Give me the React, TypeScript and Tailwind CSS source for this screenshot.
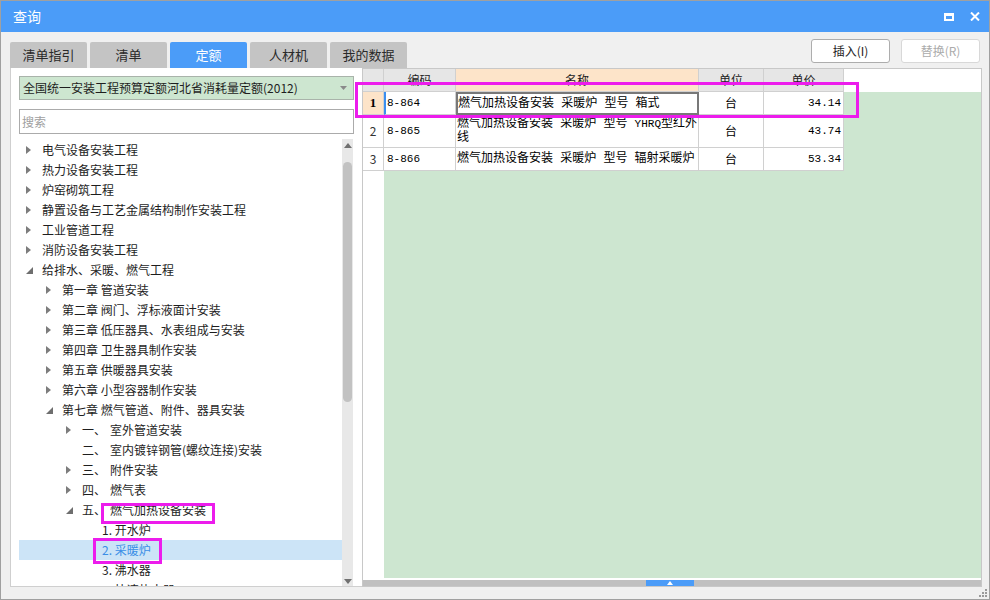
import React from "react";

type Node = {
  level: number;
  label: string;
  prefix?: string;
  state?: "open" | "closed";
  selected?: boolean;
};

const tree: Node[] = [
  { level: 0, label: "电气设备安装工程", state: "closed" },
  { level: 0, label: "热力设备安装工程", state: "closed" },
  { level: 0, label: "炉窑砌筑工程", state: "closed" },
  { level: 0, label: "静置设备与工艺金属结构制作安装工程", state: "closed" },
  { level: 0, label: "工业管道工程", state: "closed" },
  { level: 0, label: "消防设备安装工程", state: "closed" },
  { level: 0, label: "给排水、采暖、燃气工程", state: "open" },
  { level: 1, label: "第一章 管道安装", state: "closed" },
  { level: 1, label: "第二章 阀门、浮标液面计安装", state: "closed" },
  { level: 1, label: "第三章 低压器具、水表组成与安装", state: "closed" },
  { level: 1, label: "第四章 卫生器具制作安装", state: "closed" },
  { level: 1, label: "第五章 供暖器具安装", state: "closed" },
  { level: 1, label: "第六章 小型容器制作安装", state: "closed" },
  { level: 1, label: "第七章 燃气管道、附件、器具安装", state: "open" },
  { level: 2, prefix: "一、", label: "室外管道安装", state: "closed" },
  { level: 2, prefix: "二、", label: "室内镀锌钢管(螺纹连接)安装" },
  { level: 2, prefix: "三、", label: "附件安装", state: "closed" },
  { level: 2, prefix: "四、", label: "燃气表", state: "closed" },
  { level: 2, prefix: "五、", label: "燃气加热设备安装", state: "open" },
  { level: 3, label: "1. 开水炉" },
  { level: 3, label: "2. 采暖炉", selected: true },
  { level: 3, label: "3. 沸水器" },
  { level: 3, label: "4. 快速热水器" },
];

const tabs = ["清单指引", "清单", "定额", "人材机", "我的数据"];

function Arrow({ state }: { state?: "open" | "closed" }) {
  if (state === "closed")
    return (
      <svg width="5" height="8" viewBox="0 0 5 8">
        <path d="M0 0 L5 4 L0 8 Z" fill="#7c7c7c" />
      </svg>
    );
  if (state === "open")
    return (
      <svg width="7" height="7" viewBox="0 0 7 7">
        <path d="M7 0 L7 7 L0 7 Z" fill="#6e6e6e" />
      </svg>
    );
  return null;
}

function TreeRow({ n }: { n: Node }) {
  const pad = [7, 27, 47, 67][n.level];
  return (
    <div
      className={`h-[20px] flex items-center whitespace-nowrap ${
        n.selected ? "bg-[#cce4f7] text-[#3a8ee6]" : "text-[#1e1e1e]"
      }`}
      style={{ paddingLeft: pad }}
    >
      <div className="w-[16px] flex items-center">
        <Arrow state={n.state} />
      </div>
      {n.prefix ? (
        <>
          <span className="w-[28px]">{n.prefix}</span>
          <span>{n.label}</span>
        </>
      ) : (
        <span>{n.label}</span>
      )}
    </div>
  );
}

const mono = "font-['Liberation_Mono',monospace] text-[11px]";
const cjkMono = "font-['Liberation_Mono','Noto_Sans_CJK_SC',monospace]";

export default function App() {
  return (
    <div className="relative w-[990px] h-[600px] bg-[#f0f0f0] border border-[#a0a0a0] flex flex-col overflow-hidden font-['Noto_Sans_CJK_SC',sans-serif] text-[12px]">
      {/* title bar */}
      <div className="h-[31px] bg-[#4b9cf8] flex items-center justify-between pl-[12px] pr-[9px] text-white">
        <span className="text-[14px]">查询</span>
        <div className="flex items-center gap-[16px]">
          <div className="w-[10px] h-[8px] border-2 border-white border-t-[3px]"></div>
          <svg width="10" height="9" viewBox="0 0 10 9">
            <path d="M1 0.5 L9 8.5 M9 0.5 L1 8.5" stroke="#fff" strokeWidth="2" />
          </svg>
        </div>
      </div>

      {/* tabs + buttons */}
      <div className="h-[36px] flex justify-between pl-[9px] pr-[9px]">
        <div className="flex gap-[3px] mt-[10px]">
          {tabs.map((t) => (
            <div
              key={t}
              className={`w-[77px] h-[26px] rounded-t-[2px] flex items-center justify-center text-[13px] ${
                t === "定额" ? "bg-[#4b9cf8] text-white" : "bg-[#c4c4c4] text-[#2a2a2a]"
              }`}
            >
              {t}
            </div>
          ))}
        </div>
        <div className="flex gap-[11px] mt-[7px]">
          <button className="w-[79px] h-[24px] bg-white border border-[#adadad] rounded-[3px] text-[12px] text-[#222]">
            插入(I)
          </button>
          <button className="w-[79px] h-[24px] bg-white border border-[#d8d8d8] rounded-[3px] text-[12px] text-[#ababab]">
            替换(R)
          </button>
        </div>
      </div>

      {/* content */}
      <div className="h-[519px] flex pl-[9px] pr-[7px]">
        {/* left panel */}
        <div className="w-[352px] bg-white border-l border-b border-[#cfcfcf] flex flex-col pl-[8px] pt-[8px]">
          <div className="w-[335px] h-[24px] bg-[#cde6d0] border border-[#a9b3aa] flex items-center justify-between pl-[3px] pr-[6px] text-[12px] text-[#1e1e1e]">
            <span>全国统一安装工程预算定额河北省消耗量定额(2012)</span>
            <svg width="7" height="4" viewBox="0 0 7 4">
              <path d="M0 0 L7 0 L3.5 4 Z" fill="#8a8a8a" />
            </svg>
          </div>
          <div className="w-[335px] h-[25px] mt-[9px] border border-[#ababab] flex items-center pl-[2px] text-[#a0a0a0]">
            搜索
          </div>
          <div className="flex-1 mt-[5px] flex overflow-hidden">
            <div className="w-[323px] overflow-hidden pt-[1px]">
              {tree.map((n, i) => (
                <TreeRow key={i} n={n} />
              ))}
            </div>
            <div className="w-[11px] bg-[#e8e8e8] flex flex-col items-center pt-[4px] pb-[2px]">
              <svg width="8" height="5" viewBox="0 0 8 5">
                <path d="M4 0 L8 5 L0 5 Z" fill="#707070" />
              </svg>
              <div className="w-[9px] h-[240px] mt-[14px] bg-[#c2c2c2] rounded-full"></div>
              <div className="flex-1"></div>
              <svg width="8" height="5" viewBox="0 0 8 5">
                <path d="M0 0 L8 0 L4 5 Z" fill="#707070" />
              </svg>
            </div>
          </div>
        </div>

        {/* right grid */}
        <div className="flex-1 bg-white border border-[#c8c8c8] flex flex-col">
          <div className="h-[23px] flex text-[#222]">
            <div className="w-[21px] bg-[#e6e6e6] border-r border-b border-[#d0d0d0]"></div>
            <div className="w-[72px] bg-[#e6e6e6] border-r border-b border-[#d0d0d0] flex items-center justify-center">编码</div>
            <div className="w-[243px] bg-[#fde4c9] border-r border-b border-[#d0d0d0] flex items-center justify-center">名称</div>
            <div className="w-[65px] bg-[#e6e6e6] border-r border-b border-[#d0d0d0] flex items-center justify-center">单位</div>
            <div className="w-[80px] bg-[#e6e6e6] border-r border-b border-[#d0d0d0] flex items-center justify-center">单价</div>
          </div>
          <div className="flex-1 flex">
            <div className="w-[21px] bg-white flex flex-col">
              <div className="h-[23px] bg-[#fde4c9] border-r border-b border-[#d0d0d0] flex items-center justify-center font-['Liberation_Serif',serif] font-bold text-[13px]">1</div>
              <div className="h-[33px] border-r border-b border-[#d0d0d0] flex items-center justify-center text-[#333]">2</div>
              <div className="h-[23px] border-r border-b border-[#d0d0d0] flex items-center justify-center text-[#333]">3</div>
            </div>
            <div className="flex-1 bg-[#cde6d0] flex flex-col">
              <div className="w-[460px] bg-white text-black">
                <div className="h-[23px] flex">
                  <div className={`w-[72px] border-l-2 border-l-[#3b8ff0] border-r border-b border-[#d0d0d0] flex items-center pl-[1px] ${mono}`}>8-864</div>
                  <div className={`w-[243px] border-2 border-[#787878] flex items-center pl-[0px] whitespace-nowrap ${cjkMono}`}>燃气加热设备安装 采暖炉 型号 箱式</div>
                  <div className="w-[65px] border-r border-b border-[#d0d0d0] flex items-center justify-center">台</div>
                  <div className={`w-[80px] border-r border-b border-[#d0d0d0] flex items-center justify-end pr-[2px] ${mono}`}>34.14</div>
                </div>
                <div className="h-[33px] flex">
                  <div className={`w-[72px] border-r border-b border-[#d0d0d0] flex items-center pl-[3px] ${mono}`}>8-865</div>
                  <div className={`w-[243px] border-r border-b border-[#d0d0d0] flex items-center pl-[1px] leading-[14px] whitespace-nowrap ${cjkMono}`}>
                    <span>
                      燃气加热设备安装 采暖炉 型号 <span className="text-[11px]">YHRQ</span>型红外
                      <br />
                      线
                    </span>
                  </div>
                  <div className="w-[65px] border-r border-b border-[#d0d0d0] flex items-center justify-center">台</div>
                  <div className={`w-[80px] border-r border-b border-[#d0d0d0] flex items-center justify-end pr-[2px] ${mono}`}>43.74</div>
                </div>
                <div className="h-[23px] flex">
                  <div className={`w-[72px] border-r border-b border-[#d0d0d0] flex items-center pl-[3px] ${mono}`}>8-866</div>
                  <div className={`w-[243px] border-r border-b border-[#d0d0d0] flex items-center pl-[1px] whitespace-nowrap ${cjkMono}`}>燃气加热设备安装 采暖炉 型号 辐射采暖炉</div>
                  <div className="w-[65px] border-r border-b border-[#d0d0d0] flex items-center justify-center">台</div>
                  <div className={`w-[80px] border-r border-b border-[#d0d0d0] flex items-center justify-end pr-[2px] ${mono}`}>53.34</div>
                </div>
              </div>
            </div>
          </div>
          <div className="h-[2px] bg-white"></div>
          <div className="h-[6px] bg-[#c0c0c0] flex pl-[283px]">
            <div className="w-[48px] h-full bg-[#4b9cf8] flex items-center justify-center">
              <svg width="6" height="4" viewBox="0 0 6 4">
                <path d="M3 0 L6 4 L0 4 Z" fill="#fff" />
              </svg>
            </div>
          </div>
        </div>
      </div>

      {/* resize grip */}
      <div className="flex-1 flex justify-end items-end pr-[2px] pb-[2px]">
        <svg width="8" height="8" viewBox="0 0 8 8">
          <rect x="6" y="0" width="2" height="2" fill="#9a9a9a" />
          <rect x="3" y="3" width="2" height="2" fill="#9a9a9a" />
          <rect x="6" y="3" width="2" height="2" fill="#9a9a9a" />
          <rect x="0" y="6" width="2" height="2" fill="#9a9a9a" />
          <rect x="3" y="6" width="2" height="2" fill="#9a9a9a" />
          <rect x="6" y="6" width="2" height="2" fill="#9a9a9a" />
        </svg>
      </div>

      {/* annotation overlays */}
      <div className="absolute left-[354px] top-[81px] w-[504px] h-[36px] border-[3px] border-[#ec1cec]"></div>
      <div className="absolute left-[100px] top-[502px] w-[114px] h-[21px] border-[3px] border-[#ec1cec]"></div>
      <div className="absolute left-[92px] top-[537px] w-[69px] h-[26px] border-[3px] border-[#ec1cec]"></div>
    </div>
  );
}
